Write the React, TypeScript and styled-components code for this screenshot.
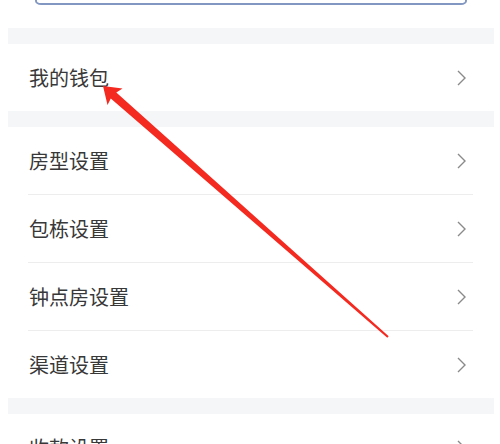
import React from "react";
import styled, { createGlobalStyle } from "styled-components";

const GlobalStyle = createGlobalStyle`
  html, body {
    margin: 0;
    padding: 0;
    background: #ffffff;
  }
  body {
    font-family: "Noto Sans CJK SC", "Noto Sans", sans-serif;
    overflow: hidden;
  }
`;

const Page = styled.div`
  position: relative;
  width: 500px;
  height: 444px;
  overflow: hidden;
  background: #ffffff;
`;

const Column = styled.div`
  display: flex;
  flex-direction: column;
  margin: 0 6px 0 8px;
`;

const Top = styled.div`
  height: 28px;
  padding: 0 27px;
`;

const TopButton = styled.div`
  height: 40px;
  margin-top: -39px;
  border: 2px solid #8297c2;
  border-radius: 6px / 4px;
  background: #ffffff;
`;

const Band = styled.div`
  height: 16px;
  background: #f5f6f8;
`;

const Group = styled.div`
  display: flex;
  flex-direction: column;
  background: #ffffff;
`;

const Row = styled.div`
  display: flex;
  align-items: center;
  justify-content: space-between;
  height: 67px;
  padding: 0 28px 0 21px;
  box-sizing: border-box;
`;

const Label = styled.span`
  font-size: 20px;
  color: #383838;
`;

const Chevron = styled.svg`
  width: 9px;
  height: 16px;
`;

const Divider = styled.div`
  height: 1px;
  margin: 0 21px 0 20px;
  background: #ededed;
`;

const Overlay = styled.svg`
  position: absolute;
  left: 0;
  top: 0;
  width: 500px;
  height: 444px;
  pointer-events: none;
`;

const Arrow = () => (
  <Chevron viewBox="0 0 9 16">
    <polyline
      points="1,1 8,8 1,15"
      fill="none"
      stroke="#8a8a8a"
      strokeWidth="1.4"
    />
  </Chevron>
);

const Item = ({ label }: { label: string }) => (
  <Row>
    <Label>{label}</Label>
    <Arrow />
  </Row>
);

const settings = ["房型设置", "包栋设置", "钟点房设置", "渠道设置"];

export default function App() {
  return (
    <Page>
      <GlobalStyle />
      <Column>
        <Top>
          <TopButton />
        </Top>
        <Band />
        <Group>
          <Item label="我的钱包" />
        </Group>
        <Band />
        <Group>
          {settings.map((s, i) => (
            <React.Fragment key={s}>
              {i > 0 && <Divider />}
              <Item label={s} />
            </React.Fragment>
          ))}
        </Group>
        <Band />
        <Group>
          <Item label="收款设置" />
        </Group>
      </Column>
      <Overlay viewBox="0 0 500 444">
        <polygon
          points="103,86 122.5,88.5 116.3,92.5 388.7,336.3 387.3,337.7 110.8,98.4 107.5,105"
          fill="#f42a20"
        />
      </Overlay>
    </Page>
  );
}
